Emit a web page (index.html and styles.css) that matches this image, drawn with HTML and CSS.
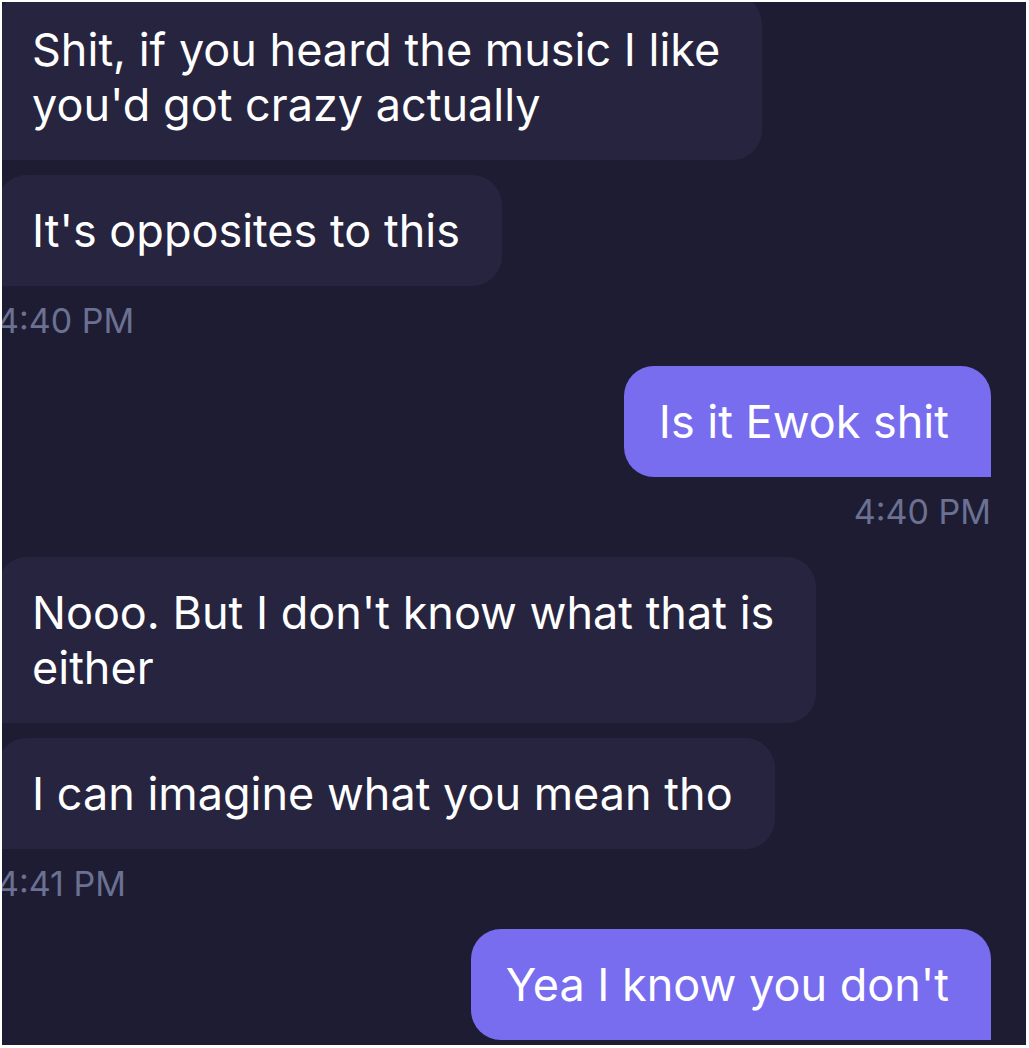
FILE: index.html
```html
<!DOCTYPE html>
<html lang="en">
<head>
    <meta charset="UTF-8">
    <meta name="viewport" content="width=device-width, initial-scale=1.0">
    <title>Chat</title>
    <link rel="stylesheet" href="styles.css">
</head>
<body>

    <div class="frame">
        <div class="chat">
            <div class="group received">
                <div class="bubble">Shit, if you heard the music I like<br>you'd got crazy actually</div>
                <div class="bubble">It's opposites to this</div>
                <div class="time">4:40 PM</div>
            </div>

            <div class="group sent">
                <div class="bubble">Is it Ewok shit</div>
                <div class="time">4:40 PM</div>
            </div>

            <div class="group received">
                <div class="bubble">Nooo. But I don't know what that is<br>either</div>
                <div class="bubble">I can imagine what you mean tho</div>
                <div class="time">4:41 PM</div>
            </div>

            <div class="group sent">
                <div class="bubble">Yea I know you don't</div>
            </div>
        </div>
    </div>

</body>
</html>
```

FILE: styles.css
```css
body {
    margin: 0;
    background-color: #ffffff;
    font-family: Inter, "Noto Sans", sans-serif;
}
.frame {
    margin: 2px 3px 3px 2px;
    height: 1043px;
    background-color: #1e1c33;
    overflow: hidden;
}
.chat {
    display: flex;
    flex-direction: column;
    gap: 25px;
    margin: -8px 35px 0 -5px;
}
.group {
    display: flex;
    flex-direction: column;
    gap: 15px;
}
.received {
    align-items: flex-start;
}
.sent {
    align-items: flex-end;
}
.bubble {
    padding: 28px 42px 28px 35px;
    font-size: 45px;
    line-height: 55px;
    color: #ffffff;
    white-space: nowrap;
}
.received .bubble {
    background-color: #272440;
    border-radius: 30px 30px 30px 0;
}
.sent .bubble {
    background-color: #786def;
    border-radius: 30px 30px 0 30px;
}
.time {
    font-size: 34px;
    line-height: 40px;
    color: #6b7192;
}
```
